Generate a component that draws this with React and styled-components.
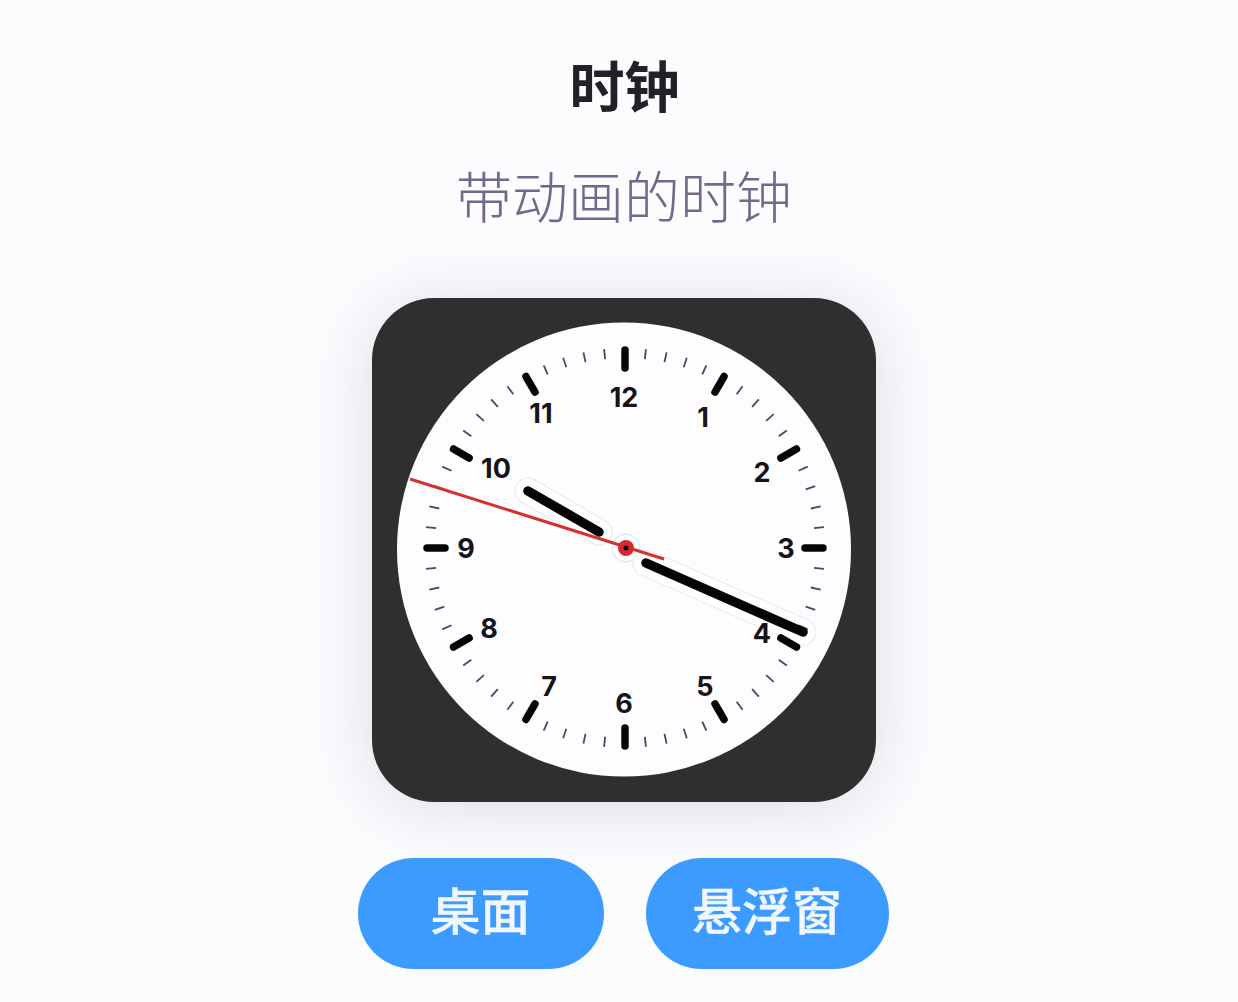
import React from 'react';
import styled, { createGlobalStyle } from 'styled-components';

const GlobalStyle = createGlobalStyle`
  html, body {
    margin: 0;
    padding: 0;
    background: #fbfcfe;
  }
`;

const Page = styled.div`
  width: 1238px;
  height: 1002px;
  overflow: hidden;
  box-sizing: border-box;
  padding: 52px 0 0 10px;
  display: flex;
  flex-direction: column;
  align-items: center;
  font-family: Inter, 'Noto Sans CJK SC', sans-serif;
`;

const Title = styled.h1`
  margin: 0 0 0 1px;
  font-size: 55px;
  line-height: 70px;
  font-weight: 700;
  color: #232126;
`;

const Subtitle = styled.h4`
  margin: 40px 0 0;
  font-size: 56px;
  line-height: 72px;
  font-weight: 300;
  color: #6f6a8b;
`;

const Card = styled.div`
  margin-top: 64px;
  width: 504px;
  height: 504px;
  border-radius: 62px;
  background: #2f2f2f;
  box-shadow: 0 6px 70px rgba(40, 50, 80, 0.15);
  display: flex;
  align-items: center;
  justify-content: center;
`;

const Dial = styled.svg`
  width: 454px;
  height: 456px;
  display: block;
`;

const Numeral = styled.text`
  font-family: Inter, sans-serif;
  font-size: 27px;
  font-weight: 700;
  fill: #16141a;
  text-anchor: middle;
  dominant-baseline: central;
`;

const Actions = styled.div`
  margin-top: 56px;
  margin-right: 2px;
  display: flex;
  gap: 42px;
`;

const Button = styled.button`
  width: ${(p) => p.$width}px;
  height: 111px;
  padding: 0 0 12px;
  border: none;
  border-radius: 56px;
  background: #3d9bff;
  color: #f0f7ff;
  font-family: 'Noto Sans CJK SC', sans-serif;
  font-size: 50px;
  font-weight: 500;
  -webkit-text-stroke: 0.4px #f0f7ff;
`;

const numerals = [
  ['12', -1, -151],
  ['1', 78, -131],
  ['2', 137, -76],
  ['3', 161, 0],
  ['4', 137, 85],
  ['5', 80, 138],
  ['6', -1, 155],
  ['7', -76, 138],
  ['8', -136, 80],
  ['9', -159, 0],
  ['10', -129, -80],
  ['11', -84, -135],
];

const hands = [
  { x1: -97, y1: -57, x2: -26, y2: -16 },
  { x1: 21, y1: 15, x2: 178, y2: 84 },
];

const Ticks = () =>
  Array.from({ length: 60 }, (_, i) => {
    const hour = i % 5 === 0;
    return (
      <line
        key={i}
        x1={0}
        y1={hour ? -198 : -200}
        x2={0}
        y2={hour ? -180 : -190}
        stroke={hour ? '#050505' : '#4d4560'}
        strokeWidth={hour ? 7.5 : 1.8}
        strokeLinecap={hour ? 'round' : 'butt'}
        transform={`rotate(${i * 6})`}
      />
    );
  });

const Clock = () => (
  <Dial viewBox="-228 -226 454 456">
    <circle cx={-1} cy={1.5} r={227} fill="#fdfdff" />
    <circle cx={1} cy={0} r={14.5} fill="#e3e9f0" />
    {hands.map((h) => (
      <g key={h.x1} strokeLinecap="round">
        <line {...h} stroke="#e3e9f0" strokeWidth={27} />
        <line {...h} stroke="#ffffff" strokeWidth={25} />
      </g>
    ))}
    <circle cx={1} cy={0} r={13} fill="#ffffff" />
    <Ticks />
    {numerals.map(([label, x, y]) => (
      <Numeral key={label} x={x} y={y}>
        {label}
      </Numeral>
    ))}
    {hands.map((h) => (
      <line key={h.x1} {...h} stroke="#050505" strokeWidth={9.5} strokeLinecap="round" />
    ))}
    <line x1={-215} y1={-69} x2={39} y2={11} stroke="#d5322f" strokeWidth={3} />
    <circle cx={1} cy={0} r={8} fill="#d8282f" />
    <circle cx={1} cy={0} r={2.5} fill="#1a0a0a" />
  </Dial>
);

export default function App() {
  return (
    <>
      <GlobalStyle />
      <Page>
        <Title>时钟</Title>
        <Subtitle>带动画的时钟</Subtitle>
        <Card>
          <Clock />
        </Card>
        <Actions>
          <Button $width={246}>桌面</Button>
          <Button $width={243}>悬浮窗</Button>
        </Actions>
      </Page>
    </>
  );
}
